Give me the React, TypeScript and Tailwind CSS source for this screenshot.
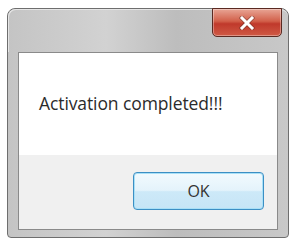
export default function App() {
  return (
    <div className="w-[295px] h-[240px] bg-white pt-[8px] pl-[7px]">
      <div
        className="relative w-[282px] h-[230px] rounded-t-[8px] rounded-b-[4px] border border-[#6e6e6e] bg-[linear-gradient(90deg,#c4c4c4_0%,#d2d2d2_35%,#bdbdbd_60%,#c8c8c8_100%)] flex flex-col"
        style={{ fontFamily: '"Open Sans", "Noto Sans", sans-serif' }}
      >
        {/* Title bar */}
        <div className="h-[43px] shrink-0 rounded-t-[8px] border-t border-l border-[#e6e6e6]" />

        {/* Close button */}
        <div className="absolute right-[6px] top-[-1px] w-[70px] h-[29px] rounded-b-[5px] border border-[#5a2a22] bg-[linear-gradient(180deg,#e8a595_0%,#d2604a_45%,#c0392b_55%,#cf5a45_100%)] flex items-center justify-center shadow-[inset_0_0_0_1px_rgba(255,255,255,0.35)]">
          <svg width="16" height="14" viewBox="0 0 16 14">
            <path
              d="M3 2 L13 12 M13 2 L3 12"
              stroke="#5a2a22"
              strokeWidth="4.5"
              strokeLinecap="square"
              opacity="0.5"
            />
            <path d="M3 2 L13 12 M13 2 L3 12" stroke="#ffffff" strokeWidth="3" strokeLinecap="square" />
          </svg>
        </div>

        {/* Client area */}
        <div className="mx-[10px] flex flex-col border border-[#8a8a8a] bg-white">
          <div className="h-[102px] pl-[20px] pt-[38px]">
            <p className="text-[17.5px] leading-[24px] text-[#2b2b2b] tracking-[-0.1px]">
              Activation completed!!!
            </p>
          </div>
          <div className="h-[74px] bg-[#f0f0f0] flex justify-end pt-[17px] pr-[13px]">
            <button className="w-[131px] h-[38px] rounded-[4px] border border-[#3c8fc4] bg-[linear-gradient(180deg,#f2fafe_0%,#e4f3fb_48%,#cde9f8_52%,#c6e5f6_100%)] shadow-[inset_0_0_0_1px_#a9e0f7] text-[16px] text-[#333] flex items-center justify-center">
              OK
            </button>
          </div>
        </div>
        <div className="flex-1" />
      </div>
    </div>
  );
}
